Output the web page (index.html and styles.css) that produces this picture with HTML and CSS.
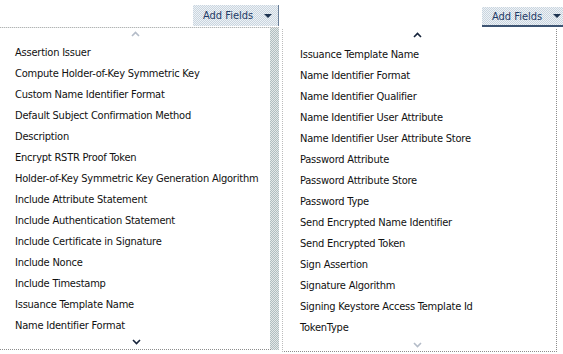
FILE: index.html
```html
<!DOCTYPE html>
<html lang="en">
<head>
    <meta charset="UTF-8">
    <title>Add Fields</title>
    <link rel="stylesheet" href="styles.css">
</head>
<body>
    <div class="panes">
        <div class="pane left">
            <div class="pane-head">
                <button class="add-button">Add Fields <span class="caret"></span></button>
            </div>
            <div class="field-list">
                <div class="scroll up faded">
                    <svg width="9" height="6" viewBox="0 0 9 6"><path d="M1 5 L4.5 1.5 L8 5" fill="none" stroke="currentColor" stroke-width="1.6"/></svg>
                </div>
                <div class="item">Assertion Issuer</div>
                <div class="item">Compute Holder-of-Key Symmetric Key</div>
                <div class="item">Custom Name Identifier Format</div>
                <div class="item">Default Subject Confirmation Method</div>
                <div class="item">Description</div>
                <div class="item">Encrypt RSTR Proof Token</div>
                <div class="item">Holder-of-Key Symmetric Key Generation Algorithm</div>
                <div class="item">Include Attribute Statement</div>
                <div class="item">Include Authentication Statement</div>
                <div class="item">Include Certificate in Signature</div>
                <div class="item">Include Nonce</div>
                <div class="item">Include Timestamp</div>
                <div class="item">Issuance Template Name</div>
                <div class="item">Name Identifier Format</div>
                <div class="scroll down">
                    <svg width="9" height="6" viewBox="0 0 9 6"><path d="M1 1 L4.5 4.5 L8 1" fill="none" stroke="currentColor" stroke-width="1.6"/></svg>
                </div>
            </div>
        </div>

        <div class="pane right">
            <div class="pane-head">
                <button class="add-button">Add Fields <span class="caret"></span></button>
            </div>
            <div class="field-list">
                <div class="scroll up">
                    <svg width="9" height="6" viewBox="0 0 9 6"><path d="M1 5 L4.5 1.5 L8 5" fill="none" stroke="currentColor" stroke-width="1.6"/></svg>
                </div>
                <div class="item">Issuance Template Name</div>
                <div class="item">Name Identifier Format</div>
                <div class="item">Name Identifier Qualifier</div>
                <div class="item">Name Identifier User Attribute</div>
                <div class="item">Name Identifier User Attribute Store</div>
                <div class="item">Password Attribute</div>
                <div class="item">Password Attribute Store</div>
                <div class="item">Password Type</div>
                <div class="item">Send Encrypted Name Identifier</div>
                <div class="item">Send Encrypted Token</div>
                <div class="item">Sign Assertion</div>
                <div class="item">Signature Algorithm</div>
                <div class="item">Signing Keystore Access Template Id</div>
                <div class="item">TokenType</div>
                <div class="scroll down faded">
                    <svg width="9" height="6" viewBox="0 0 9 6"><path d="M1 1 L4.5 4.5 L8 1" fill="none" stroke="currentColor" stroke-width="1.6"/></svg>
                </div>
            </div>
        </div>
    </div>
</body>
</html>
```

FILE: styles.css
```css
body {
    margin: 0;
    background-color: #fff;
    font-family: 'DejaVu Sans Condensed', 'Liberation Sans', sans-serif;
    font-size: 11px;
    color: #111;
}
.panes {
    display: flex;
    gap: 3px;
    width: 563px;
    height: 354px;
    overflow: hidden;
}
.pane {
    display: flex;
    flex-direction: column;
}
.pane.left {
    width: 279px;
}
.pane.right {
    width: 281px;
}
.pane-head {
    display: flex;
    justify-content: flex-end;
}
.left .pane-head {
    height: 27px;
}
.right .pane-head {
    height: 29px;
}
.add-button {
    display: flex;
    align-items: center;
    justify-content: space-between;
    height: 21px;
    padding: 0 6px 0 10px;
    border: none;
    background: repeating-conic-gradient(#c9d5df 0 25%, #eef2f6 0 50%) 0 0 / 2px 2px;
    color: #1e3a66;
    font-family: inherit;
    font-size: 11px;
}
.left .add-button {
    width: 86px;
    margin-top: 5px;
    border-right: 1px solid #6a7f99;
}
.right .add-button {
    width: 85px;
    height: 20px;
    margin-top: 7px;
    margin-right: -4px;
    border-bottom: 2px solid #3d5472;
}
.caret {
    width: 0;
    height: 0;
    border-left: 4px solid transparent;
    border-right: 4px solid transparent;
    border-top: 4px solid #1d3350;
}
.field-list {
    background-color: #fff;
}
/* white box with a dithered shadow strip down its right side */
.left .field-list {
    width: 279px;
    border-top: 1px dotted #b4b4b4;
    padding-left: 15px;
    padding-right: 9px;
    box-sizing: border-box;
    background:
        linear-gradient(#fff, #fff) left top / 270px 100% no-repeat,
        repeating-conic-gradient(#b0bec0 0 25%, #e4e9e9 0 50%) 0 0 / 2px 2px;
}
.left .field-list .scroll.down {
    border-bottom: 1px dotted #8c8c8c;
    margin-left: -15px;
    margin-right: -1px;
    padding-left: 15px;
}
.right .field-list {
    width: 275px;
    border-left: 1px dotted #bcbcbc;
    border-right: 1px dotted #8c8c8c;
    border-bottom: 1px dotted #8c8c8c;
    padding-left: 17px;
    box-sizing: border-box;
}
.item {
    height: 21px;
    line-height: 21px;
    white-space: nowrap;
    letter-spacing: -0.22px;
}
.scroll {
    display: flex;
    justify-content: center;
    color: #15233a;
    padding-right: 14px;
    box-sizing: border-box;
}
.scroll.faded {
    color: #b4bcc8;
}
.left .scroll.up {
    height: 14px;
    padding-top: 3px;
}
.right .scroll.up {
    height: 15px;
    padding-top: 3px;
}
.left .scroll.down {
    height: 14px;
    padding-top: 3px;
}
.right .scroll.down {
    height: 13px;
    padding-top: 4px;
}
.right .scroll.up,
.right .scroll.down {
    padding-right: 22px;
}
```
